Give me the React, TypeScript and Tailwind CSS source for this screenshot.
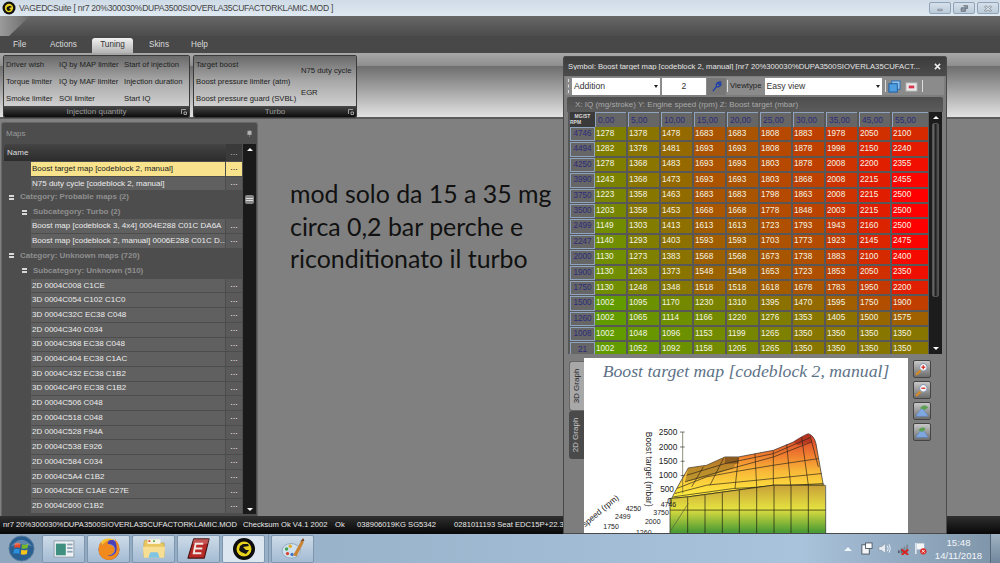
import React from "react";

const UI = { fontFamily: '"Liberation Sans", Arial, sans-serif' };

const rowsData: [string, number[]][] = [
  ["4746", [1278, 1378, 1478, 1683, 1683, 1808, 1883, 1978, 2050, 2100]],
  ["4494", [1282, 1378, 1481, 1693, 1693, 1808, 1878, 1998, 2150, 2240]],
  ["4250", [1278, 1368, 1483, 1693, 1693, 1803, 1878, 2008, 2200, 2355]],
  ["3990", [1243, 1368, 1473, 1693, 1693, 1803, 1868, 2008, 2215, 2455]],
  ["3750", [1223, 1358, 1463, 1683, 1683, 1798, 1863, 2008, 2215, 2500]],
  ["3500", [1203, 1358, 1453, 1668, 1668, 1778, 1848, 2003, 2215, 2500]],
  ["2499", [1149, 1303, 1413, 1613, 1613, 1723, 1793, 1943, 2160, 2500]],
  ["2247", [1140, 1293, 1403, 1593, 1593, 1703, 1773, 1923, 2145, 2475]],
  ["2000", [1130, 1273, 1383, 1568, 1568, 1673, 1738, 1883, 2100, 2400]],
  ["1900", [1130, 1263, 1373, 1548, 1548, 1653, 1723, 1853, 2050, 2350]],
  ["1750", [1130, 1248, 1348, 1518, 1518, 1618, 1678, 1783, 1950, 2200]],
  ["1500", [1002, 1095, 1170, 1230, 1310, 1395, 1470, 1595, 1750, 1900]],
  ["1260", [1002, 1065, 1114, 1166, 1220, 1276, 1353, 1405, 1500, 1575]],
  ["1008", [1002, 1048, 1096, 1153, 1199, 1265, 1350, 1350, 1350, 1350]],
  ["21", [1002, 1052, 1092, 1158, 1205, 1265, 1350, 1350, 1350, 1350]],
];
const cols = ["0,00", "5,00", "10,00", "15,00", "20,00", "25,00", "30,00", "35,00", "45,00", "55,00"];

function heat(v: number) {
  const t = Math.min(1, Math.max(0, (v - 1000) / 1500));
  const r = Math.round(98 + 157 * t);
  const g = Math.round(155 * (1 - t));
  return `rgb(${r},${g},0)`;
}

const mapRows = [
  "2D 0004C008 C1CE",
  "3D 0004C054 C102 C1C0",
  "3D 0004C32C EC38 C048",
  "2D 0004C340 C034",
  "3D 0004C368 EC38 C048",
  "3D 0004C404 EC38 C1AC",
  "3D 0004C432 EC38 C1B2",
  "3D 0004C4F0 EC38 C1B2",
  "2D 0004C506 C048",
  "2D 0004C518 C048",
  "2D 0004C528 F94A",
  "2D 0004C538 E926",
  "2D 0004C584 C034",
  "2D 0004C5A4 C1B2",
  "3D 0004C5CE C1AE C27E",
  "2D 0004C600 C1B2",
];

function MapRow({ label, bg = "bg-[#606060]", color = "text-[#ececec]", dots = "" }: { label: string; bg?: string; color?: string; dots?: string }) {
  return (
    <div className="flex h-[13.7px] mb-px">
      <div className="w-[27px] shrink-0" />
      <div className={`flex-1 min-w-0 ${bg} ${color} text-[8px] leading-none flex items-center px-px whitespace-nowrap overflow-hidden`}>{label}</div>
      <div className={`w-[16px] ml-px shrink-0 flex items-center justify-center text-[9px] leading-none pb-[2px] ${dots || "bg-[#5a5a5a] text-[#eee]"}`}>...</div>
    </div>
  );
}

function GroupHead({ label, indent, mt }: { label: string; indent: number; mt: string }) {
  return (
    <div className={`flex items-center ${mt} h-[10px]`} style={{ paddingLeft: indent }}>
      <div className="w-[5px] h-[5px] bg-[#d8d8d8] mr-[6px] flex items-center"><div className="w-full h-px bg-[#444]" /></div>
      <span className="text-[#8f8f8f] font-bold text-[8px] leading-none whitespace-nowrap">{label}</span>
    </div>
  );
}

function RibbonGroup({ width, title, children }: { width: string; title: string; children: React.ReactNode }) {
  return (
    <div className={`${width} h-[63px] flex flex-col rounded-[2px] overflow-hidden border border-[#3a3a3a] mr-[3px] shrink-0`}>
      <div className="flex-1 bg-gradient-to-b from-[#6a6a6a] via-[#a8a8a8] to-[#d0d0d0] relative flex text-[#222] text-[7.7px] leading-none">{children}</div>
      <div className="h-[11px] bg-gradient-to-b from-[#4a4a4a] to-[#0d0d0d] text-[#9a9a9a] text-[8px] leading-none flex items-center justify-center relative">
        {title}
        <svg viewBox="0 0 6 6" className="absolute right-[2px] top-[3px] w-[6px] h-[6px]"><path d="M0.5 5 V0.5 H5 M3 3 H5.5 V5.5 H3 Z" stroke="#bbb" fill="none" strokeWidth="0.8" /></svg>
      </div>
    </div>
  );
}

function Col({ cls, items }: { cls: string; items: string[] }) {
  return (
    <div className={`flex flex-col ${cls}`}>
      {items.map((t) => (
        <span key={t} className="whitespace-nowrap">{t}</span>
      ))}
    </div>
  );
}

function ZoomIcon({ kind }: { kind: "plus" | "minus" }) {
  return (
    <svg viewBox="0 0 18 18" className="w-full h-full">
      <path d="M3 15 L8 10" stroke="#d88a20" strokeWidth="2.4" strokeLinecap="round" />
      <circle cx="10.5" cy="7" r="4.2" fill="#f4f6fa" stroke="#8a99ad" strokeWidth="1.2" />
      <path d="M8.3 7 H12.7" stroke="#d8352a" strokeWidth="1.5" />
      {kind === "plus" && <path d="M10.5 4.8 V9.2" stroke="#d8352a" strokeWidth="1.5" />}
    </svg>
  );
}

function TiltIcon({ up }: { up: boolean }) {
  return (
    <svg viewBox="0 0 18 18" className="w-full h-full">
      <path d="M2 15 L9 5 L16 15 Z" fill="#7fa8e0" stroke="#5b84c0" strokeWidth="0.6" />
      <path d={up ? "M7 6 C9 2 13 2 16 5 L12 8 Z" : "M5 7 C7 3 12 3 13 6 L9 9 Z"} fill="#5aa050" />
    </svg>
  );
}

function SideButton({ children }: { children: React.ReactNode }) {
  return (
    <div className="w-[18px] h-[18px] mb-[3px] rounded-[2px] border border-[#444] bg-gradient-to-b from-[#c8c8c8] to-[#6d6d6d]">{children}</div>
  );
}

function Chart() {
  const xs = [330, 383, 435, 487, 538, 590, 642, 693, 745, 797];
  const tops = [435, 431, 424, 417, 410, 403, 395, 395, 395, 395];
  return (
    <svg viewBox="72 12 972 527" className="w-full h-full block" preserveAspectRatio="none">
      <defs>
        <linearGradient id="back" x1="0" y1="240" x2="0" y2="430" gradientUnits="userSpaceOnUse">
          <stop offset="0" stopColor="#d83a2a" />
          <stop offset="0.35" stopColor="#f08030" />
          <stop offset="0.6" stopColor="#f8b838" />
          <stop offset="1" stopColor="#fff040" />
        </linearGradient>
        <linearGradient id="front" x1="0" y1="395" x2="0" y2="535" gradientUnits="userSpaceOnUse">
          <stop offset="0" stopColor="#c8a038" />
          <stop offset="0.5" stopColor="#e4e040" />
          <stop offset="1" stopColor="#4c9c34" />
        </linearGradient>
      </defs>
      <text x="128" y="68" fontFamily='"Liberation Serif", serif' fontStyle="italic" fontSize="53" fill="#5d7287" textLength="860" lengthAdjust="spacingAndGlyphs">Boost target map [codeblock 2, manual]</text>
      <path d="M350 405 L385 343 L440 335 L495 310 L535 310 L640 290 L700 265 Q730 245 745 240 Q762 245 768 270 L775 310 L790 395 L640 395 L385 430 L335 435 Z" fill="url(#back)" stroke="#222" strokeWidth="2" />
      <path d="M385 343 L440 335 L495 310 L535 310 L520 345 L495 352 L440 370 L375 385 Z" fill="#8a6a20" opacity="0.55" />
      <path d="M495 310 L535 310 L535 330 L495 330 Z" fill="#8a5a20" />
      <path d="M700 265 Q730 245 745 240 L755 265 L715 275 Z" fill="#a0281c" opacity="0.6" />
      <path d="M350 405 L440 370 L520 355 L640 335 L775 315 M345 420 L440 395 L640 375 L785 360 M340 430 L520 405 L790 390 M375 385 L495 350 L640 310 L755 265 M380 365 L495 330 L640 300 L750 252 M430 340 L395 400 M490 315 L450 395 M535 312 L525 405 M585 300 L590 400 M640 292 L640 395 M680 272 L692 395 M725 250 L745 395 M750 245 L775 340" fill="none" stroke="#2a2216" strokeWidth="2" />
      <path d="M330 435 L385 430 L640 395 L795 395 L797 540 L330 540 Z" fill="url(#front)" />
      <path d="M330 435 L385 430 L640 395 L795 395 M330 470 H797" fill="none" stroke="#1a1a10" strokeWidth="2" />
      {xs.map((x, i) => (
        <path key={x} d={`M${x} ${tops[i]} V540`} stroke="#1a1a10" strokeWidth="2" />
      ))}
      <path d="M368 235 V420 M330 535 L385 450" stroke="#5a5a3a" strokeWidth="2" fill="none" />
      <path d="M360 235 H374 M360 280 H374 M362 323 H374 M362 366 H374" stroke="#333" strokeWidth="2" />
      <g fontFamily='"Liberation Sans", sans-serif' fontSize="25" fill="#222" textAnchor="end">
        <text x="352" y="245">2500</text>
        <text x="352" y="288">2000</text>
        <text x="352" y="331">1500</text>
        <text x="352" y="374">1000</text>
        <text x="342" y="417">500</text>
        <text x="336" y="452">0</text>
      </g>
      <g fontFamily='"Liberation Sans", sans-serif' fontSize="21" fill="#222">
        <text x="197" y="473">4250</text>
        <text x="165" y="497">2499</text>
        <text x="130" y="528">1750</text>
        <text x="228" y="545">1260</text>
        <text x="302" y="462">4746</text>
        <text x="280" y="485">3750</text>
        <text x="255" y="513">2000</text>
      </g>
      <text transform="translate(258 234) rotate(90)" fontFamily='"Liberation Sans", sans-serif' fontSize="25" fill="#222" textLength="226">Boost target (mbar)</text>
      <text transform="translate(75 522) rotate(-40)" fontFamily='"Liberation Sans", sans-serif' fontSize="25" fill="#222">speed (rpm)</text>
    </svg>
  );
}

function SymbolWindow() {
  return (
    <div className="absolute left-[563px] top-[56px] w-[384px] h-[478px] z-10 bg-[#7d7d7d] border border-[#4a4a4a] rounded-t-[2px] flex flex-col overflow-hidden" style={UI}>
      <div className="h-[19px] shrink-0 bg-gradient-to-b from-[#3c3c3c] to-[#4c4c4c] flex items-center pl-[4px] pr-[5px] text-[#e4e4e4] text-[7.7px] leading-none">
        <span className="flex-1 whitespace-nowrap overflow-hidden">Symbol: Boost target map [codeblock 2, manual] [nr7 20%300030%DUPA3500SIOVERLA35CUFACT...</span>
        <svg viewBox="0 0 8 8" className="w-[7px] h-[7px] ml-[3px]"><path d="M1 1 L7 7 M7 1 L1 7" stroke="#eee" strokeWidth="1.7" /></svg>
      </div>
      <div className="h-[18px] mt-px mx-[2px] shrink-0 bg-[#8b8b8b] flex items-center pl-[2px] text-[#222] text-[8.6px] leading-none">
        <div className="w-[3px] h-[14px] border-l border-dashed border-[#ddd] mr-[1px]" />
        <div className="w-[88px] h-[17px] bg-white flex items-center pl-[2px] justify-between pr-[2px]">
          <span className="text-[#333]">Addition</span>
          <div className="w-0 h-0 border-x-[2px] border-x-transparent border-t-[3px] border-t-[#222]" />
        </div>
        <div className="w-[44px] h-[17px] bg-white ml-[2px] flex items-center justify-center text-[#333]">2</div>
        <div className="w-[19px] h-[17px] ml-px bg-[#777] flex items-center justify-center">
          <svg viewBox="0 0 12 12" className="w-[11px] h-[11px]"><path d="M2 11 L6 6 M6 6 C5 3 7 1 10 1 L8 3 L10 5 L11 2 C11 5 9 7 6 6" stroke="#1f3fa8" strokeWidth="1.5" fill="none" /></svg>
        </div>
        <div className="w-px h-[12px] bg-[#ddd] mx-px" />
        <span className="ml-px text-[#222] text-[7.8px]">Viewtype</span>
        <div className="w-[117px] h-[17px] bg-white ml-[3px] flex items-center pl-[2px] pr-[2px] justify-between">
          <span className="text-[#333]">Easy view</span>
          <div className="w-0 h-0 border-x-[2px] border-x-transparent border-t-[3px] border-t-[#222]" />
        </div>
        <div className="w-px h-[12px] bg-[#ddd] ml-[3px] mr-[1px]" />
        <svg viewBox="0 0 14 14" className="w-[13px] h-[13px] ml-px"><rect x="4" y="1" width="9" height="9" fill="#8ec0ea" stroke="#2a6cb0" /><rect x="1" y="4" width="9" height="9" fill="#4f9fe0" stroke="#1d5a9e" /></svg>
        <svg viewBox="0 0 14 14" className="w-[13px] h-[13px] ml-[4px]"><rect x="1" y="3" width="12" height="9" fill="#e9e9e9" stroke="#aaa" /><rect x="4" y="6" width="6" height="3" fill="#d8344a" /></svg>
        <div className="w-px h-[12px] bg-[#ddd] ml-[4px]" />
      </div>
      <div className="h-[15px] mt-[2px] mx-[3px] shrink-0 bg-gradient-to-b from-[#4e4e4e] to-[#5c5c5c] flex items-center pl-[8px] text-[#a8a8a8] text-[8px] leading-none rounded-t-[2px]">
        X: IQ (mg/stroke) Y: Engine speed (rpm) Z: Boost target (mbar)
      </div>
      <div className="h-[242px] mx-[4px] shrink-0 bg-[#585858] flex overflow-hidden">
        <div className="flex-1 min-w-0 pl-[2px]">
          <div className="flex h-[15px]">
            <div className="w-[25px] shrink-0 bg-[#3a3a3a] text-[#ddd] text-[5px] leading-[6px] font-bold text-center pt-px">MG/ST<br /><span className="block text-left">RPM</span></div>
            {cols.map((c, i) => (
              <div key={c} className={`${i === 9 ? "w-[36px]" : "w-[31px] mr-[2px]"} bg-[#666] border-l border-t border-[#8ea3bd] text-[#2c2c7a] text-[8.4px] leading-none flex items-center pl-[2px] shrink-0`}>{c}</div>
            ))}
          </div>
          {rowsData.map(([rpm, vals]) => (
            <div key={rpm} className="flex h-[15.4px]">
              <div className="w-[25px] h-[14.4px] shrink-0 bg-[#666] border border-[#8ea3bd] text-[#2c2c7a] text-[8.2px] leading-none flex items-center justify-center">{rpm}</div>
              {vals.map((v, i) => (
                <div key={i} style={{ background: heat(v) }} className={`${i === 9 ? "w-[36px]" : "w-[31px] mr-[2px]"} h-[13.4px] shrink-0 text-[#f4f4e4] text-[8.2px] leading-none flex items-center pl-px`}>{v}</div>
              ))}
            </div>
          ))}
        </div>
        <div className="w-[13px] shrink-0 bg-[#1c1c1c] flex flex-col items-center ml-[1px]">
          <div className="h-[11px] flex items-center"><div className="w-0 h-0 border-x-[3px] border-x-transparent border-b-[3px] border-b-white" /></div>
          <div className="w-[7px] h-[174px] rounded-[2px] bg-gradient-to-r from-[#777] via-[#222] to-[#555] border border-[#555]" />
          <div className="flex-1" />
          <div className="h-[11px] flex items-center"><div className="w-0 h-0 border-x-[3px] border-x-transparent border-t-[3px] border-t-white" /></div>
        </div>
      </div>
      <div className="flex-1 min-h-0 flex mt-[4px] ml-[5px]">
        <div className="w-[15px] shrink-0 pt-[3px] flex flex-col">
          <div className="h-[50px] bg-[#a8a8a8] rounded-l-[3px] border border-[#666] border-r-0 flex items-center justify-center">
            <span className="-rotate-90 whitespace-nowrap text-[#222] text-[8px] leading-none">3D Graph</span>
          </div>
          <div className="h-[48px] bg-[#4a4a4a] rounded-l-[3px] flex items-center justify-center">
            <span className="-rotate-90 whitespace-nowrap text-[#ccc] text-[8px] leading-none">2D Graph</span>
          </div>
        </div>
        <div className="w-[324px] shrink-0 bg-white"><Chart /></div>
        <div className="flex-1 pl-[5px] pt-[2px]">
          <SideButton><ZoomIcon kind="plus" /></SideButton>
          <SideButton><ZoomIcon kind="minus" /></SideButton>
          <SideButton><TiltIcon up /></SideButton>
          <SideButton><TiltIcon up={false} /></SideButton>
        </div>
      </div>
    </div>
  );
}

function TaskButton({ children, active = false }: { children: React.ReactNode; active?: boolean }) {
  return (
    <div className={`w-[43px] h-[28px] mr-[2px] rounded-[2px] border border-[#7f97ad] flex items-center justify-center ${active ? "bg-[#dbe6f0]" : "bg-gradient-to-b from-[#cddbe8] to-[#a3bbd3]"}`}>{children}</div>
  );
}

function Taskbar() {
  return (
    <div className="h-[29px] shrink-0 relative z-20 flex items-center bg-[linear-gradient(to_right,#8fa8c0,#a9c3dc_80%,#7e94a8)]" style={UI}>
      <div className="w-[42px] h-full flex items-center justify-center shrink-0">
        <svg viewBox="0 0 28 28" className="w-[27px] h-[27px]">
          <circle cx="14" cy="14" r="13" fill="#2a5f92" stroke="#5d7f9f" />
          <path d="M7 9 Q10 7 13 9 L12.4 13.5 Q9.5 12 6.4 13.5 Z" fill="#e8482c" />
          <path d="M14.5 9.5 Q17.5 11 21 9 L20.4 13.6 Q17 15 14 13.8 Z" fill="#76b82a" />
          <path d="M6.2 15 Q9.4 13.5 12.2 15 L11.6 19.6 Q8.6 18 5.6 19.6 Z" fill="#2a8fdc" />
          <path d="M13.8 15.4 Q17 16.5 20.2 15 L19.6 19.6 Q16.4 21 13.2 20 Z" fill="#f6c21c" />
          <path d="M3 12 Q14 -2 25 12 Q14 7 3 12 Z" fill="#ffffff" opacity="0.25" />
        </svg>
      </div>
      <TaskButton>
        <svg viewBox="0 0 24 20" className="w-[22px] h-[18px]"><rect x="1" y="1" width="22" height="18" fill="#eef2f5" stroke="#8b9ba8" /><rect x="3" y="4" width="11" height="13" fill="#3f8f80" /><rect x="15.5" y="4" width="6" height="2" fill="#8fa3b5" /><rect x="15.5" y="8" width="6" height="2" fill="#8fa3b5" /><rect x="15.5" y="12" width="6" height="2" fill="#8fa3b5" /></svg>
      </TaskButton>
      <TaskButton>
        <svg viewBox="0 0 24 24" className="w-[24px] h-[24px]">
          <circle cx="12" cy="12.5" r="10.5" fill="#4a3fb8" />
          <circle cx="12.5" cy="12.5" r="5.5" fill="#6f8fe8" />
          <path d="M17 1 C20 4 23 8 22.5 13 C22 19 17 23 12 23 C6 23 1.5 18.5 1.5 12.5 C1.5 9 3 6 4 5 C4 7 5 8 6 8 C7 5 9.5 4 12 4 C10 6 10.5 7 12.5 7.5 C15 8 18 10 17.5 13 C17 16 14 18.5 10.5 18 C12 19.5 16 19 18.5 16 C20.5 13 20 7 17 1 Z" fill="#f08a1d" />
          <path d="M4 5 C6 2 10 1 13 1.5 C16 2 17 3 17 3 C13 2.5 8 4 6 8 C5 8 4 7 4 5 Z" fill="#fbc22a" />
        </svg>
      </TaskButton>
      <TaskButton>
        <svg viewBox="0 0 26 22" className="w-[24px] h-[21px]">
          <path d="M2 5 L2 20 L24 20 L24 5 L12 5 L10 2 L3 2 Z" fill="#e9c862" stroke="#b59a44" strokeWidth="0.6" />
          <rect x="6" y="1" width="14" height="5" fill="#f7f4e2" />
          <rect x="7" y="2" width="2" height="2" fill="#e04a3a" />
          <rect x="12" y="2" width="2" height="2" fill="#5fb04a" />
          <path d="M1 9 L25 9 L24 21 L2 21 Z" fill="#f6df93" />
          <path d="M7 21 L9 15 L17 15 L19 21 Z" fill="#7fc4e4" />
        </svg>
      </TaskButton>
      <TaskButton>
        <svg viewBox="0 0 24 24" className="w-[23px] h-[23px]">
          <path d="M7 2 L23 2 L18 22 L1 22 Z" fill="#b82a28" stroke="#4a1210" strokeWidth="1.2" strokeLinejoin="round" />
          <path d="M17 7 L9 7 L7 17 L15 17 M8 12 L16 12" fill="none" stroke="#f2e6e0" strokeWidth="2" />
          <path d="M7 2 L23 2 L21.8 7 L5.8 7 Z" fill="#fff" opacity="0.2" />
        </svg>
      </TaskButton>
      <TaskButton active>
        <svg viewBox="0 0 24 24" className="w-[24px] h-[24px]">
          <circle cx="12" cy="12" r="11" fill="#0c0c0c" />
          <circle cx="12" cy="12" r="7.5" fill="#e8d21e" />
          <path d="M8 9 L11 7 L16 7 L17 9 L11 10 L14 13 L17 13 L14 17 L9 15 L7 13 Z" fill="#141414" />
        </svg>
      </TaskButton>
      <div className="w-px h-full bg-[#7f97ad] ml-[1px] mr-[2px]" />
      <TaskButton>
        <svg viewBox="0 0 26 24" className="w-[24px] h-[22px]">
          <ellipse cx="11" cy="14" rx="10" ry="8" fill="#cfe0ee" stroke="#8ea6ba" />
          <circle cx="6" cy="12" r="1.8" fill="#3ea34a" />
          <circle cx="10" cy="9" r="1.8" fill="#e0b020" />
          <circle cx="7" cy="17" r="1.8" fill="#d8402c" />
          <circle cx="12" cy="18" r="1.8" fill="#3f76c9" />
          <path d="M13 19 L22 3 L25 4 L17 20 Z" fill="#c98436" />
          <path d="M21 4 L24 0 L25.5 3 Z" fill="#7a4a1f" />
        </svg>
      </TaskButton>
      <div className="flex-1" />
      <div className="w-0 h-0 border-x-[4px] border-x-transparent border-b-[4px] border-b-[#eef4f8] mr-[8px]" />
      <svg viewBox="0 0 14 14" className="w-[13px] h-[13px] mr-[5px]"><rect x="2" y="3" width="8" height="10" fill="#f2f4f6" stroke="#4c5a66" /><rect x="6" y="1" width="7" height="6" fill="#fff" stroke="#4c5a66" /></svg>
      <svg viewBox="0 0 14 14" className="w-[13px] h-[13px] mr-[6px]"><path d="M1 5 H4 L8 1.5 V12.5 L4 9 H1 Z" fill="#e8eef3" stroke="#7f8f9e" strokeWidth="0.6" /><path d="M10 4 Q12 7 10 10 M12 2.5 Q14.5 7 12 11.5" stroke="#eef3f7" fill="none" /></svg>
      <svg viewBox="0 0 14 14" className="w-[13px] h-[13px] mr-[4px]"><rect x="1" y="9" width="2" height="3" fill="#59636d" /><rect x="4" y="7" width="2" height="5" fill="#59636d" /><rect x="7" y="5" width="2" height="7" fill="#7e8892" /><rect x="10" y="3" width="2" height="9" fill="#7e8892" /><path d="M5 8 L12 14 M12 8 L5 14" stroke="#d6221e" strokeWidth="2" /></svg>
      <svg viewBox="0 0 14 14" className="w-[13px] h-[13px]"><path d="M2 1 V13" stroke="#f4f6f8" strokeWidth="1.4" /><path d="M3 1.5 H11 V8 H3 Z" fill="#f4f6f8" /><circle cx="10" cy="10" r="3.4" fill="#d9302c" /><path d="M8.6 8.6 L11.4 11.4 M11.4 8.6 L8.6 11.4" stroke="#fff" strokeWidth="1" /></svg>
      <div className="w-[63px] shrink-0 flex flex-col items-center text-[#f3f6f9] text-[9.6px] leading-[13px]">
        <span>15:48</span>
        <span>14/11/2018</span>
      </div>
      <div className="w-[10px] h-full shrink-0 bg-gradient-to-b from-[#9fb2c4] to-[#71879b] border-l border-[#55687a]" />
    </div>
  );
}

export default function App() {
  return (
    <div className="w-[1000px] h-[563px] relative overflow-hidden flex flex-col bg-[#808080]" style={UI}>
      <div className="h-[16px] shrink-0 bg-gradient-to-b from-[#cfdbe6] to-[#dfe9f2] flex items-center relative">
        <svg viewBox="0 0 14 14" className="w-[14px] h-[14px] ml-[2px] mr-[3px]"><circle cx="7" cy="7" r="6.5" fill="#111" /><circle cx="7" cy="7" r="4.2" fill="#e6cf20" /><path d="M5 6 L8 4.8 L10 6 L7 7 L9 9 L6 10 L4.6 8 Z" fill="#111" /></svg>
        <span className="text-[#444] text-[8.6px] tracking-[-0.27px] leading-none whitespace-nowrap">VAGEDCSuite [ nr7 20%300030%DUPA3500SIOVERLA35CUFACTORKLAMIC.MOD ]</span>
        <div className="flex-1" />
        <div className="flex mr-px gap-[2px]">
          {[
            <path key="a" d="M4 7 H10 V9 H4 Z" fill="#dfe5ea" stroke="#44505a" strokeWidth="0.7" />,
            <path key="b" d="M6 2 H12 V6 H10 M3 5 H9 V10 H3 Z" fill="#8d99a4" stroke="#44505a" strokeWidth="0.8" />,
            <path key="c" d="M4 2 L7 5 L10 2 L12 4 L9 6 L12 9 L10 10 L7 8 L4 10 L2 9 L5 6 L2 4 Z" fill="#dfe5ea" stroke="#44505a" strokeWidth="0.7" />,
          ].map((p, i) => (
            <div key={i} className="w-[22px] h-[12px] rounded-[2px] border border-[#8ea3b7] bg-gradient-to-b from-[#d6e0ea] to-[#bccbda] flex items-center justify-center">
              <svg viewBox="0 0 14 12" className="w-[10px] h-[9px]">{p}</svg>
            </div>
          ))}
        </div>
      </div>

      <div className="h-[20px] shrink-0 bg-gradient-to-b from-[#686868] to-[#4c4c4c] relative overflow-hidden">
        <div className="absolute left-0 top-0 bottom-0 w-[30px] bg-gradient-to-r from-[#9b9b9b] to-[#6a6a6a] [clip-path:polygon(0_0,100%_0,30%_100%,0_100%)]" />
      </div>

      <div className="h-[17px] shrink-0 bg-[#484848] flex items-end text-[#dcdcdc] text-[8.2px] leading-none">
        <span className="ml-[13px] mb-[4px] w-[37px]">File</span>
        <span className="mb-[4px] w-[42px]">Actions</span>
        <div className="w-[41px] h-[15px] rounded-t-[3px] bg-gradient-to-b from-[#f2f2f2] to-[#b4b4b4] text-[#333] flex items-center justify-center">Tuning</div>
        <span className="ml-[16px] mb-[4px] w-[42px]">Skins</span>
        <span className="mb-[4px]">Help</span>
      </div>

      <div className="h-[66px] shrink-0 bg-[linear-gradient(to_bottom,#a8a8a8_0,#8e8e8e_19%,#6c6c6c_19%,#e2e2e2_97%,#5a5a5a_97%)] flex items-start pt-[2px] pl-[3px]">
        <RibbonGroup width="w-[187px]" title="Injection quantity">
          <Col cls="ml-[2px] w-[53px] justify-between pt-[5px] pb-[3px]" items={["Driver wish", "Torque limiter", "Smoke limiter"]} />
          <Col cls="w-[65px] justify-between pt-[5px] pb-[3px]" items={["IQ by MAP limiter", "IQ by MAF limiter", "SOI limiter"]} />
          <Col cls="justify-between pt-[5px] pb-[3px]" items={["Start of injection", "Injection duration", "Start IQ"]} />
        </RibbonGroup>
        <RibbonGroup width="w-[164px]" title="Turbo">
          <Col cls="ml-[2px] w-[105px] justify-between pt-[5px] pb-[3px]" items={["Target boost", "Boost pressure limiter (atm)", "Boost pressure guard (SVBL)"]} />
          <Col cls="justify-center gap-[14px] pt-[2px]" items={["N75 duty cycle", "EGR"]} />
        </RibbonGroup>
      </div>

      <div className="flex-1 min-h-0 flex">
        <div className="w-[257px] ml-[1px] mt-[3px] shrink-0 rounded-t-[3px] bg-[#4d4d4d] border border-[#666] border-b-0 flex flex-col overflow-hidden pb-[2px]">
          <div className="h-[21px] shrink-0 flex items-center justify-between px-[4px] text-[#9a9a9a] text-[8px] leading-none">
            <span>Maps</span>
            <svg viewBox="0 0 8 8" className="w-[7px] h-[7px]"><path d="M2 1 H6 V5 H2 Z M4 5 V8 M1 5 H7" fill="#b4b4b4" stroke="#b4b4b4" strokeWidth="0.5" /></svg>
          </div>
          <div className="flex-1 min-h-0 flex ml-[2px] mr-[1px] overflow-hidden">
            <div className="flex-1 min-w-0 overflow-hidden">
              <div className="h-[17px] flex mb-px bg-gradient-to-b from-[#444] to-[#2c2c2c] text-[#ddd] text-[8px] leading-none items-center pl-[3px] rounded-tl-[3px]">
                <span className="flex-1">Name</span>
                <div className="w-[16px] ml-px self-stretch flex items-center justify-center bg-[#3a3a3a] text-[#bbb] text-[9px]">...</div>
              </div>
              <MapRow label="Boost target map [codeblock 2, manual]" bg="bg-[#f8e38c]" color="text-[#222]" dots="bg-[#f8e38c] text-[#222]" />
              <MapRow label="N75 duty cycle [codeblock 2, manual]" />
              <GroupHead label="Category: Probable maps (2)" indent={5} mt="mt-[2px]" />
              <GroupHead label="Subcategory: Turbo (2)" indent={18} mt="mt-[5px]" />
              <div className="mt-[2px]" />
              <MapRow label="Boost map [codeblock 3, 4x4] 0004E288 C01C DA6A" />
              <MapRow label="Boost map [codeblock 2, manual] 0006E288 C01C D..." />
              <GroupHead label="Category: Unknown maps (720)" indent={5} mt="mt-[3px]" />
              <GroupHead label="Subcategory: Unknown (510)" indent={18} mt="mt-[5px]" />
              <div className="mt-[3px]" />
              {mapRows.map((r) => (
                <MapRow key={r} label={r} />
              ))}
            </div>
            <div className="w-[13px] shrink-0 bg-[#1a1a1a] flex flex-col items-center ml-px">
              <div className="h-[10px] flex items-center"><div className="w-0 h-0 border-x-[3px] border-x-transparent border-b-[3px] border-b-white" /></div>
              <div className="w-[9px] h-[9px] mt-[41px] rounded-[2px] bg-[#888] flex flex-col justify-center gap-[1px] px-[1px]">
                <div className="h-px bg-[#ddd]" /><div className="h-px bg-[#ddd]" />
              </div>
              <div className="flex-1" />
              <div className="h-[10px] flex items-center"><div className="w-0 h-0 border-x-[3px] border-x-transparent border-t-[3px] border-t-white" /></div>
            </div>
          </div>
        </div>
        <div className="pl-[32px] pt-[58px] text-[24.9px] leading-[32.5px] text-[#111] whitespace-nowrap" style={{ fontFamily: "Lato, sans-serif" }}>
          <div>mod solo da 15 a 35 mg</div>
          <div>circa 0,2 bar perche e</div>
          <div>riconditionato il turbo</div>
        </div>
      </div>

      <div className="h-[18px] shrink-0 bg-gradient-to-b from-[#303030] to-[#080808] flex items-center pl-[3px] text-[#e8e8e8] text-[7.6px] leading-none whitespace-nowrap overflow-hidden">
        <span className="w-[240px]">nr7 20%300030%DUPA3500SIOVERLA35CUFACTORKLAMIC.MOD</span>
        <span className="w-[92px]">Checksum Ok V4.1 2002</span>
        <span className="w-[22px]">Ok</span>
        <span className="w-[97px]">038906019KG SG5342</span>
        <span>0281011193 Seat EDC15P+22.3.2 1,9</span>
      </div>

      <SymbolWindow />
      <Taskbar />
    </div>
  );
}
